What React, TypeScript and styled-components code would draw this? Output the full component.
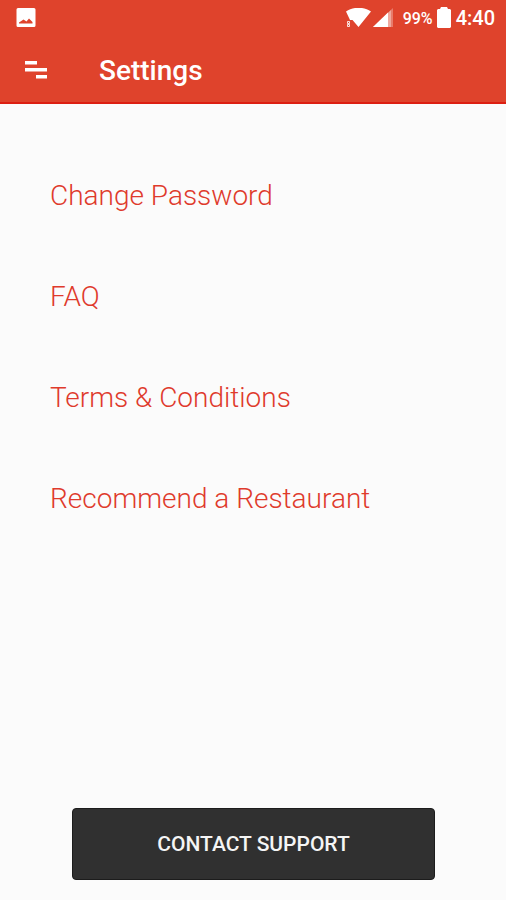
import React from "react";
import styled, { createGlobalStyle } from "styled-components";

const GlobalStyle = createGlobalStyle`
  *, *::before, *::after { box-sizing: border-box; }
  body { margin: 0; background: #fbfbfb; font-family: Roboto, "Liberation Sans", sans-serif; }
`;

const Screen = styled.div`
  display: flex;
  flex-direction: column;
  min-height: 100vh;
`;

const Header = styled.header`
  background: #df432c;
  border-bottom: 2px solid #dc1f12;
  color: #fff;
`;

const StatusBar = styled.div`
  display: flex;
  align-items: center;
  justify-content: space-between;
  height: 36px;
  padding: 0 11px 0 16px;
`;

const StatusGroup = styled.div`
  display: flex;
  align-items: center;
`;

const Percent = styled.span`
  margin: 0 4px 0 9px;
  font-size: 16px;
  font-weight: 500;
`;

const Clock = styled.time`
  margin-left: 5px;
  font-size: 20px;
  font-weight: 500;
`;

const AppBar = styled.div`
  display: flex;
  align-items: center;
  gap: 52px;
  height: 66px;
  padding: 4px 25px 0;
`;

const MenuButton = styled.button`
  display: flex;
  padding: 0;
  border: 0;
  background: none;
  color: inherit;
  cursor: pointer;
`;

const Title = styled.h1`
  margin: 0;
  font-size: 28px;
  line-height: 34px;
  font-weight: 500;
`;

const Options = styled.nav`
  display: flex;
  flex: 1;
  flex-direction: column;
  align-items: flex-start;
  gap: 65px;
  padding: 74px 50px;
`;

const OptionLink = styled.a`
  color: #df3a2c;
  font-size: 28px;
  line-height: 36px;
  font-weight: 300;
  text-decoration: none;
`;

const Footer = styled.footer`
  padding: 0 71px 20px 72px;
`;

const SupportButton = styled.button`
  width: 100%;
  height: 72px;
  border: 1px solid #1c1c1c;
  border-radius: 4px;
  background: #303030;
  color: #f5f5f5;
  font-family: inherit;
  font-size: 21px;
  font-weight: 500;
  cursor: pointer;
`;

const options = ["Change Password", "FAQ", "Terms & Conditions", "Recommend a Restaurant"];

const PictureIcon = () => (
  <svg width="20" height="20" viewBox="0 0 20 20" aria-hidden="true">
    <path fill="#fff" fillRule="evenodd" d="M2 0h16a1.500 1.500 0 0 1 1.500 1.500v16a1.500 1.500 0 0 1-1.500 1.500H2a1.500 1.500 0 0 1-1.500-1.500v-16A1.500 1.500 0 0 1 2 0zM3 15.500h13.500v-1.500L13 10.500l-2.500 3L7.500 11.500 3 14.500z" />
  </svg>
);

const SignalIcons = () => (
  <svg width="48" height="20" viewBox="0 0 48 20" aria-hidden="true">
    <path fill="#fff" d="M0 3.500C7-1.500 18-1.500 25 3.500L12.500 19 6.500 12 4 12z" />
    <path fill="none" stroke="#fff" strokeOpacity="0.850" d="M1.500 13.500h2v2h-2zM1.500 16.500h2v2h-2z" />
    <path fill="#fff" fillOpacity="0.300" d="M47 0v19H27z" />
    <path fill="#fff" fillOpacity="0.350" d="M45 2v17H27z" />
    <path fill="#fff" d="M42 4.500V19H27z" />
  </svg>
);

const BatteryIcon = () => (
  <svg width="14" height="22" viewBox="0 0 14 22" aria-hidden="true">
    <path fill="#fff" d="M4 0h6l1 2h2l1 1v17l-1 1H1l-1-1V3l1-1h2z" />
  </svg>
);

const MenuIcon = () => (
  <svg width="22" height="20" viewBox="0 0 22 20" aria-hidden="true">
    <path fill="#fff" d="M0 0h12v3.500H0zM0 7h22v3.500H0zM11 14h11v3.500H11z" />
  </svg>
);

export default function App() {
  return (
    <Screen>
      <GlobalStyle />
      <Header>
        <StatusBar>
          <PictureIcon />
          <StatusGroup>
            <SignalIcons />
            <Percent>99%</Percent>
            <BatteryIcon />
            <Clock>4:40</Clock>
          </StatusGroup>
        </StatusBar>
        <AppBar>
          <MenuButton type="button" aria-label="Open menu"><MenuIcon /></MenuButton>
          <Title>Settings</Title>
        </AppBar>
      </Header>
      <Options aria-label="Settings">
        {options.map((label) => (
          <OptionLink href="#" key={label}>{label}</OptionLink>
        ))}
      </Options>
      <Footer>
        <SupportButton type="button">CONTACT SUPPORT</SupportButton>
      </Footer>
    </Screen>
  );
}
